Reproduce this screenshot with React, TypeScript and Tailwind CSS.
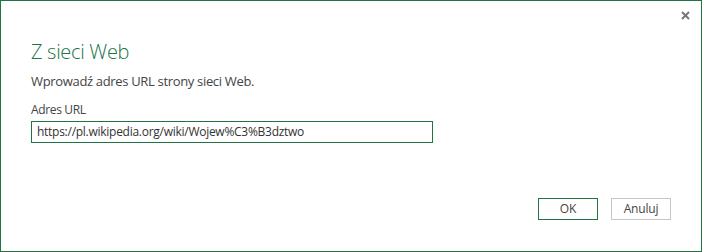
import React from "react";

export default function App() {
  return (
    <div
      className="relative w-[702px] h-[252px] border border-[#217346] bg-white text-[#444]"
      style={{ fontFamily: '"Open Sans", "Noto Sans", sans-serif' }}
    >
      <button className="absolute right-[11px] top-[9px] w-[10px] h-[10px] flex items-center justify-center">
        <svg width="9" height="9" viewBox="0 0 9 9">
          <path d="M1 1 L8 8 M8 1 L1 8" stroke="#777" strokeWidth="2" />
        </svg>
      </button>
      <div className="flex flex-col h-full pl-[30px] pr-[30px]">
        <div className="mt-[37px] text-[20px] leading-[28px] font-light tracking-[-0.3px] text-[#217346]">
          Z sieci Web
        </div>
        <div className="mt-[6px] text-[13px] leading-[18px] tracking-[-0.33px] text-[#444]">
          Wprowadź adres URL strony sieci Web.
        </div>
        <div className="mt-[12px] text-[12px] leading-[16px] tracking-[-0.35px] text-[#444]">Adres URL</div>
        <div className="mt-[3px] w-[402px] h-[22px] border border-[#217346] flex items-center pl-[5px] text-[12px] tracking-[-0.27px] text-[#333]">
          https://pl.wikipedia.org/wiki/Wojew%C3%B3dztwo
        </div>
        <div className="flex-1" />
        <div className="flex justify-end gap-[13px] mb-[31px]">
          <button className="w-[60px] h-[22px] border border-[#217346] text-[12px] text-[#444] flex items-center justify-center">
            OK
          </button>
          <button className="w-[60px] h-[22px] border border-[#c6c6c6] text-[12px] tracking-[-0.2px] text-[#444] flex items-center justify-center">
            Anuluj
          </button>
        </div>
      </div>
    </div>
  );
}
